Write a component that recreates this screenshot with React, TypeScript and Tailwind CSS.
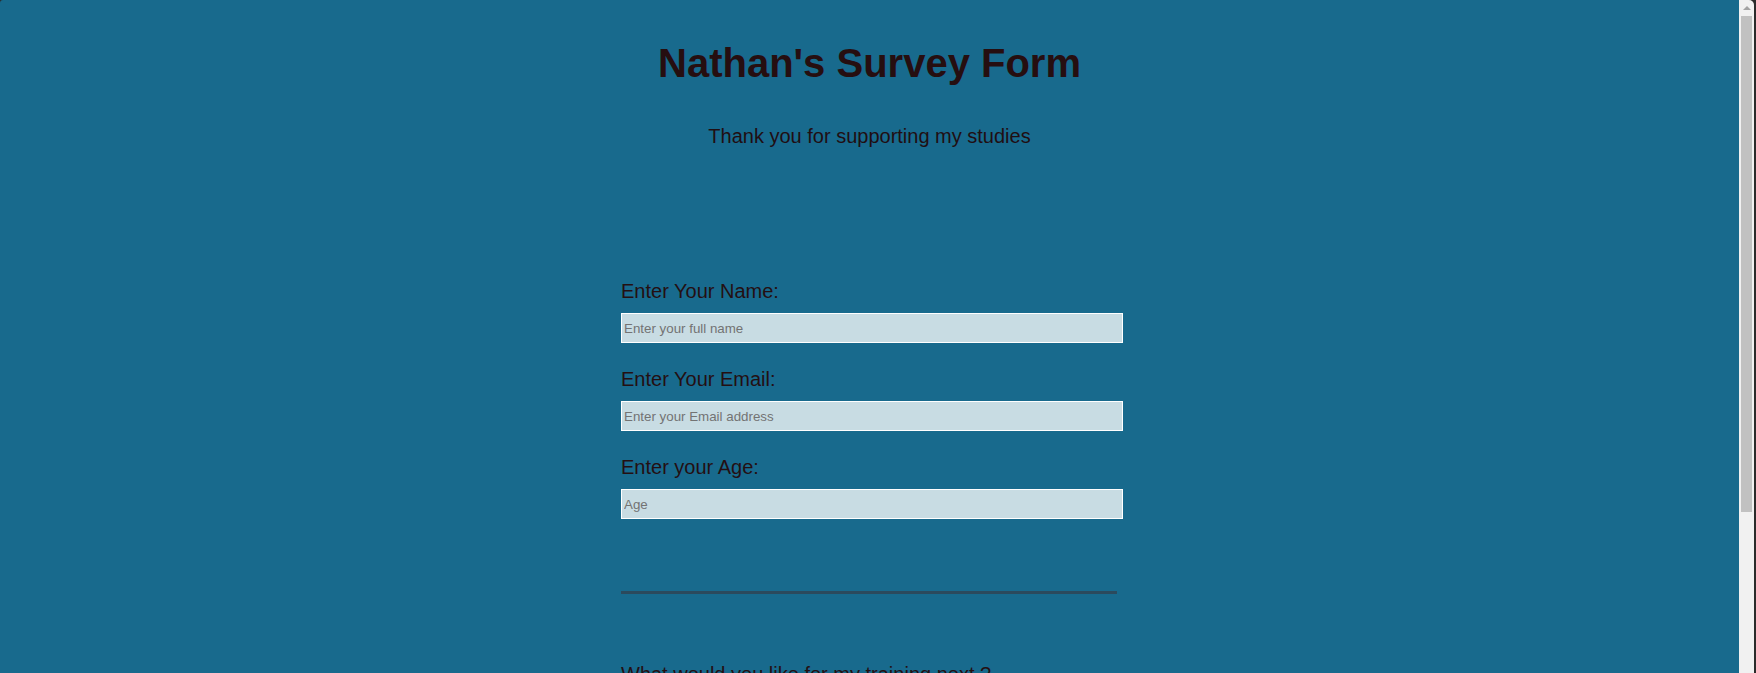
import React from "react";

function Field({ label, placeholder, type }: { label: string; placeholder: string; type: string }) {
  return (
    <div className="mb-[25px]">
      <label className="block text-[20px] leading-[22px] text-[#240f12]">{label}</label>
      <input
        type={type}
        placeholder={placeholder}
        className="mt-[11px] block h-[30px] w-[502px] border border-white bg-[#c8dce3] px-[2px] text-[13.333px] text-black outline-none placeholder:text-[#737373]"
      />
    </div>
  );
}

export default function App() {
  return (
    <div className="flex h-screen overflow-hidden bg-[#2b2b2b] font-['Liberation_Sans',Arial,sans-serif]">
      <main className="flex-1 overflow-hidden rounded-tl-[3px] bg-[#186a8d] pt-[40px]">
        <h1 className="text-center text-[40px] font-bold leading-[46px] text-[#260e10]">Nathan's Survey Form</h1>
        <p className="mt-[39px] text-center text-[20px] leading-[23px] text-[#200e12]">Thank you for supporting my studies</p>
        <form className="mx-auto mt-[132px] w-[497px]">
          <Field label="Enter Your Name:" placeholder="Enter your full name" type="text" />
          <Field label="Enter Your Email:" placeholder="Enter your Email address" type="email" />
          <Field label="Enter your Age:" placeholder="Age" type="number" />
          <div className="mt-[72px] h-[3px] w-[496px] bg-[#2b4a5d]" />
          <p className="mt-[69px] text-[20px] leading-[22px] text-[#240f12]">What would you like for my training next ?</p>
        </form>
      </main>
      <div className="flex w-[15px] flex-col rounded-tr-[5px] bg-[#f1f1f1]">
        <div className="flex h-[16px] items-center justify-center">
          <div className="h-0 w-0 border-x-[4px] border-b-[4px] border-x-transparent border-b-[#a3a3a3]" />
        </div>
        <div className="mx-[2px] h-[496px] bg-[#c1c1c1]" />
      </div>
      <div className="w-[2px] bg-[#2b2b2b]" />
    </div>
  );
}
